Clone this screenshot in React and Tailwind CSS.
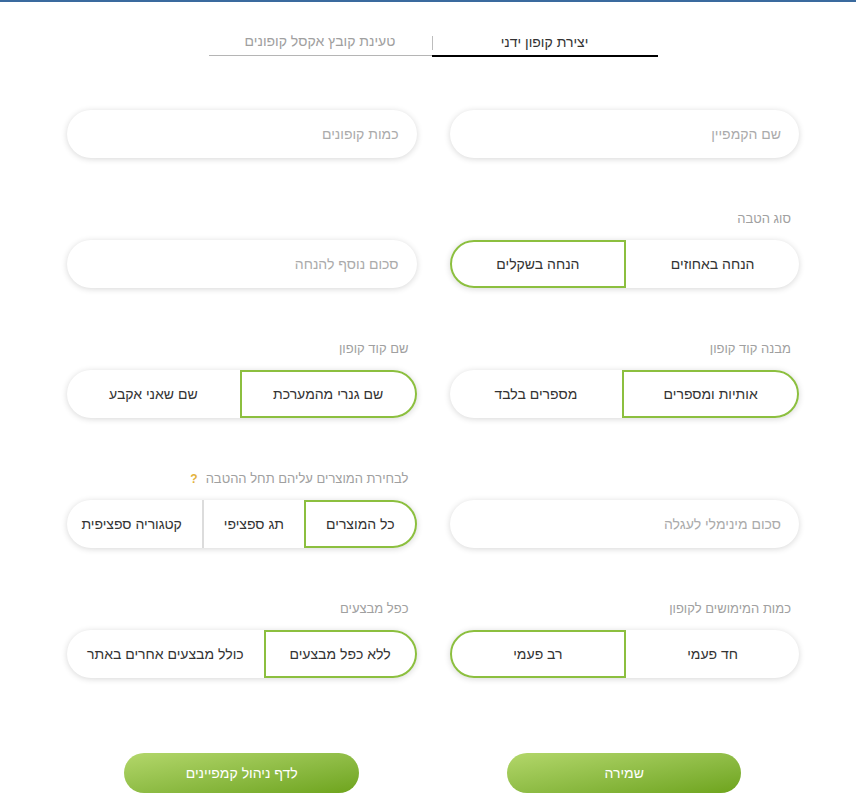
import React, { useState } from "react";

const GREEN = "border-[#8cbf3f]";

const Label = ({ children, help }) => (
  <div className="h-8 text-[13px] leading-[22px] text-[#a0a0a0] flex items-start gap-2 pr-2">
    <span>{children}</span>
    {help && <span className="text-[#e3b23c] font-bold text-[12px]">?</span>}
  </div>
);

const TextField = ({ placeholder }) => (
  <input
    placeholder={placeholder}
    className="w-full h-12 rounded-full bg-white px-[18px] text-[14px] text-[#333] placeholder:text-[#ababab] outline-none shadow-[0_1px_6px_rgba(0,0,0,0.16)]"
  />
);

const Toggle = ({ options, initial = 0 }) => {
  const [active, setActive] = useState(initial);
  const last = options.length - 1;

  return (
    <div className="flex h-12 w-full rounded-full bg-white shadow-[0_1px_6px_rgba(0,0,0,0.16)]">
      {options.map((opt, i) => {
        const isOn = i === active;
        const shape =
          i === 0 ? "rounded-r-full" : i === last ? "rounded-l-full" : "";
        const divider = i > 0 && !isOn && i - 1 !== active ? "border-r-2 border-r-[#dcdcdc]" : "";
        return (
          <button
            key={opt}
            onClick={() => setActive(i)}
            className={`flex-1 whitespace-nowrap px-5 text-[14px] text-[#333] flex items-center justify-center ${shape} ${
              isOn ? `border-2 ${GREEN}` : divider
            }`}
          >
            {opt}
          </button>
        );
      })}
    </div>
  );
};

const Field = ({ label, help, children }) => (
  <div className="flex flex-col">
    <Label help={help}>{label}</Label>
    {children}
  </div>
);

export default function App() {
  const [tab, setTab] = useState(0);

  return (
    <div
      dir="rtl"
      className="min-h-[801px] bg-white border-t-2 border-[#3a6a9e]"
      style={{ fontFamily: '"Liberation Sans", Arial, sans-serif' }}
    >
      <div className="w-[732px] mr-[57px] ml-[67px]">
        {/* Tabs */}
        <div className="flex justify-center items-end pt-[19px]">
          <button
            onClick={() => setTab(0)}
            className={`w-[226px] h-[35px] pt-[6px] leading-[20px] text-[14px] text-center ${
              tab === 0 ? "border-b-2 border-black text-[#333]" : "border-b border-[#b5b5b5] text-[#9a9a9a]"
            }`}
          >
            יצירת קופון ידני
          </button>
          <button
            onClick={() => setTab(1)}
            className={`relative w-[223px] h-[35px] pt-[6px] leading-[20px] text-[14px] text-center mb-px ${
              tab === 1 ? "border-b-2 border-black text-[#333]" : "border-b border-[#b5b5b5] text-[#a0a0a0]"
            }`}
          >
            טעינת קובץ אקסל קופונים
            <span className="absolute right-[-1px] top-[15px] h-[14px] w-px bg-[#bdbdbd]" />
          </button>
        </div>

        {/* Form */}
        <div className="grid grid-cols-2 gap-x-[33px] gap-y-[50px] mt-[21px]">
          <Field>
            <TextField placeholder="שם הקמפיין" />
          </Field>
          <Field>
            <TextField placeholder="כמות קופונים" />
          </Field>

          <Field label="סוג הטבה">
            <Toggle options={["הנחה באחוזים", "הנחה בשקלים"]} initial={1} />
          </Field>
          <Field>
            <TextField placeholder="סכום נוסף להנחה" />
          </Field>

          <Field label="מבנה קוד קופון">
            <Toggle options={["אותיות ומספרים", "מספרים בלבד"]} initial={0} />
          </Field>
          <Field label="שם קוד קופון">
            <Toggle options={["שם גנרי מהמערכת", "שם שאני אקבע"]} initial={0} />
          </Field>

          <Field>
            <TextField placeholder="סכום מינימלי לעגלה" />
          </Field>
          <Field label="לבחירת המוצרים עליהם תחל ההטבה" help>
            <Toggle options={["כל המוצרים", "תג ספציפי", "קטגוריה ספציפית"]} initial={0} />
          </Field>

          <Field label="כמות המימושים לקופון">
            <Toggle options={["חד פעמי", "רב פעמי"]} initial={1} />
          </Field>
          <Field label="כפל מבצעים">
            <Toggle options={["ללא כפל מבצעים", "כולל מבצעים אחרים באתר"]} initial={0} />
          </Field>
        </div>

        {/* Actions */}
        <div className="grid grid-cols-2 gap-x-[33px] mt-[75px]">
          <div className="flex justify-center">
            <button className="w-[234px] h-10 rounded-full text-white text-[14px] bg-gradient-to-br from-[#b3d76a] to-[#6ea41a]">
              שמירה
            </button>
          </div>
          <div className="flex justify-center">
            <button className="w-[235px] h-10 rounded-full text-white text-[14px] bg-gradient-to-br from-[#b3d76a] to-[#6ea41a]">
              לדף ניהול קמפיינים
            </button>
          </div>
        </div>
      </div>
    </div>
  );
}
